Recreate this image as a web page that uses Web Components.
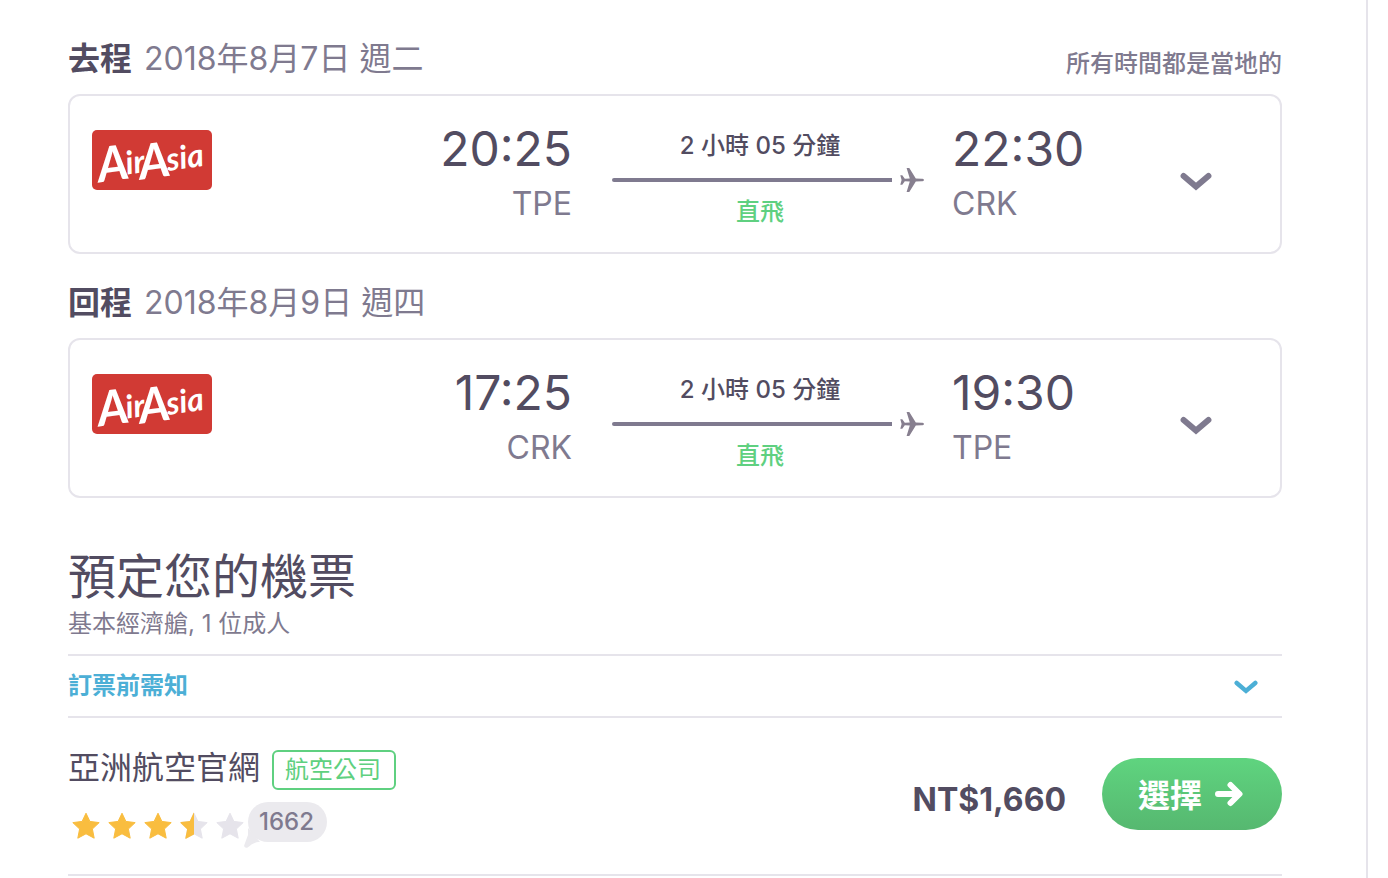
<!DOCTYPE html>
<html lang="zh-Hant">
<head>
<meta charset="utf-8">
<meta name="viewport" content="width=device-width, initial-scale=1">
<title>航班詳情</title>
<style>
  body {
    margin: 0;
    background: #fff;
    color: #524c61;
    font-family: Inter, "Noto Sans CJK TC", sans-serif;
  }
</style>
</head>
<body>
<trip-panel>
  <flight-leg label="去程" date="2018年8月7日 週二" note="所有時間都是當地的"
    depart="20:25" from="TPE" arrive="22:30" to="CRK" duration="2 小時 05 分鐘" stops="直飛"></flight-leg>
  <flight-leg label="回程" date="2018年8月9日 週四"
    depart="17:25" from="CRK" arrive="19:30" to="TPE" duration="2 小時 05 分鐘" stops="直飛"></flight-leg>
  <booking-section>
    <span slot="title">預定您的機票</span>
    <span slot="summary">基本經濟艙, 1 位成人</span>
    <span slot="notice">訂票前需知</span>
    <booking-offer price="NT$1,660" rating="3.5" reviews="1662">
      <span slot="name">亞洲航空官網</span>
      <span slot="badge">航空公司</span>
      <span slot="action">選擇</span>
    </booking-offer>
  </booking-section>
</trip-panel>

<script>
const define = (name, render) => customElements.define(name, class extends HTMLElement {
  connectedCallback() {
    if (this.shadowRoot) return;
    this.attachShadow({ mode: 'open' }).innerHTML = render(this);
  }
});

define('trip-panel', () => `
  <style>
    :host { display: block; }
    main {
      box-sizing: border-box;
      min-height: 100vh;
      margin-right: 20px;
      padding: 10px 84px 0 68px;
      border-right: 2px solid #e6e4eb;
    }
  </style>
  <main><slot></slot></main>`);

define('airline-logo', () => `
  <style>
    :host { display: block; width: 120px; height: 60px; }
    svg { display: block; overflow: visible; }
    text { font-family: Lato, sans-serif; font-style: italic; font-weight: 700; fill: #fff; font-size: 48px; }
    tspan { font-size: 32px; }
  </style>
  <svg width="120" height="60" viewBox="0 0 120 60" role="img" aria-label="AirAsia">
    <rect width="120" height="60" rx="5" fill="#d13a34"/>
    <g transform="rotate(-8 60 30)">
      <text x="5" y="45">A<tspan dx="-3" dy="-4">ir</tspan></text>
      <text x="46" y="48">A<tspan dx="-3" dy="-5">sia</tspan></text>
    </g>
  </svg>`);

define('chevron-icon', () => `
  <style>
    :host { display: block; width: 32px; }
    svg { display: block; width: 100%; }
  </style>
  <svg viewBox="0 0 32 20" aria-hidden="true">
    <path d="M3.600 4 16 14.500 28.400 4" fill="none" stroke="currentColor" stroke-width="6" stroke-linecap="round"/>
  </svg>`);

define('flight-leg', el => {
  const a = n => el.getAttribute(n);
  return `
  <style>
    :host { display: block; }
    header {
      display: flex;
      justify-content: space-between;
      align-items: flex-end;
      height: 84px;
      box-sizing: border-box;
      padding-bottom: 11px;
    }
    h2 { margin: 0; font-size: 32px; line-height: 48px; font-weight: 400; color: #7f7a8f; }
    h2 b { margin-right: 12px; font-weight: 700; color: #524c61; }
    .note { font-size: 24px; line-height: 38px; font-weight: 500; color: #7f7a8f; }
    article {
      display: grid;
      grid-template-columns: 120px 1fr 312px 256px 32px;
      box-sizing: border-box;
      height: 160px;
      padding: 25px 68px 0 22px;
      border: 2px solid #e6e4eb;
      border-radius: 12px;
    }
    airline-logo { margin-top: 9px; }
    .stop { display: flex; flex-direction: column; }
    .depart { align-items: flex-end; padding-right: 40px; }
    .arrive { padding-left: 28px; }
    time { font-size: 48px; line-height: 56px; }
    .code { font-size: 32px; line-height: 54px; color: #7f7a8f; }
    .route {
      display: flex;
      flex-direction: column;
      padding-top: 7px;
      font-size: 24px;
      line-height: 36px;
      font-weight: 500;
      text-align: center;
    }
    .route span { padding-right: 16px; }
    .route .stops { line-height: 32px; color: #5fd080; }
    .track { display: flex; align-items: center; gap: 8px; height: 32px; }
    .track i { flex: 1; height: 4px; border-radius: 2px 0 0 2px; background: #7f7a8f; }
    button { margin: 0; padding: 0; border: 0; background: none; color: #7f7a8f; height: 122px; cursor: pointer; }
  </style>
  <header>
    <h2><b>${a('label')}</b>${a('date')}</h2>
    ${a('note') ? `<span class="note">${a('note')}</span>` : ''}
  </header>
  <article>
    <airline-logo></airline-logo>
    <div class="stop depart"><time>${a('depart')}</time><span class="code">${a('from')}</span></div>
    <div class="route">
      <span>${a('duration')}</span>
      <div class="track"><i></i>
        <svg width="24" height="24" viewBox="0 0 24 24" aria-hidden="true">
          <path fill="#877f8f" d="M24 12c0 .8-1.200 1.300-2.500 1.300L15.800 13.600 9.300 24H6.600L9.800 13.400 4.800 13.200 2.300 16.800H.3L1.600 12 .3 7.200H2.300L4.800 10.800 9.800 10.600 6.600 0H9.300L15.800 10.400 21.500 10.700C22.800 10.700 24 11.200 24 12Z"/>
        </svg>
      </div>
      <span class="stops">${a('stops')}</span>
    </div>
    <div class="stop arrive"><time>${a('arrive')}</time><span class="code">${a('to')}</span></div>
    <button type="button" aria-label="顯示航班詳情"><chevron-icon></chevron-icon></button>
  </article>`;
});

define('booking-section', () => `
  <style>
    :host { display: block; padding-top: 48px; }
    h1 { margin: 0; font-size: 48px; line-height: 62px; font-weight: 400; }
    p { margin: 0; padding-bottom: 14px; font-size: 24px; line-height: 32px; color: #7f7a8f; }
    button {
      display: flex;
      justify-content: space-between;
      align-items: center;
      box-sizing: border-box;
      width: 100%;
      height: 64px;
      margin: 0;
      padding: 0 24px 0 0;
      border: solid #e6e4eb;
      border-width: 2px 0;
      background: none;
      color: #4cafd6;
      font: 700 24px/36px Inter, "Noto Sans CJK TC", sans-serif;
      cursor: pointer;
    }
    chevron-icon { width: 24px; padding-top: 2px; }
  </style>
  <h1><slot name="title"></slot></h1>
  <p><slot name="summary"></slot></p>
  <button type="button" aria-expanded="false"><slot name="notice"></slot><chevron-icon></chevron-icon></button>
  <slot></slot>`);

define('star-rating', el => {
  const value = Number(el.getAttribute('value'));
  const full = 'M14 1.200 17.900 9.400 27.200 10.600 20.400 17 22.200 26.200 14 21.800 5.800 26.200 7.600 17 .8 10.600 10.100 9.400Z';
  const half = 'M14 .6 13.500 .9 9.800 9 .8 10.100Q.2 10.600 .5 11L7.100 17.200 5.300 26.200Q5.400 26.800 6 26.700L14 22.400Z';
  const stars = [0, 1, 2, 3, 4].map(i => {
    const part = value - i;
    const base = part >= 1 ? '#f9bd3f' : '#e6e4eb';
    return `<svg width="28" height="28" viewBox="0 0 28 28" aria-hidden="true">
      <path d="${full}" fill="${base}" stroke="${base}" stroke-linejoin="round"/>
      ${part > 0 && part < 1 ? `<path d="${half}" fill="#f9bd3f"/>` : ''}
    </svg>`;
  }).join('');
  return `
  <style>
    :host { display: flex; gap: 8px; }
    svg { display: block; }
  </style>${stars}`;
});

define('booking-offer', el => `
  <style>
    :host {
      display: flex;
      justify-content: space-between;
      align-items: center;
      padding: 32px 0;
      border-bottom: 2px solid #e6e4eb;
    }
    .heading { display: flex; align-items: flex-start; gap: 12px; }
    h3 { margin: 0; font-size: 32px; line-height: 36px; font-weight: 400; }
    .badge {
      padding: 0 13px 0 11px;
      border: 2px solid #5fd080;
      border-radius: 6px;
      color: #5fd080;
      font-size: 24px;
      line-height: 36px;
    }
    .feedback { display: flex; gap: 4px; margin-top: 12px; padding-left: 4px; }
    star-rating { padding-top: 10px; }
    .reviews {
      position: relative;
      padding: 0 13px 0 11px;
      border-radius: 20px;
      background: #ebeaee;
      color: #7f7a8f;
      font-size: 24px;
      line-height: 40px;
      font-weight: 500;
    }
    .reviews svg { position: absolute; left: -4px; bottom: -6px; }
    .buy { display: flex; align-items: center; gap: 36px; padding-bottom: 4px; }
    .price { padding-top: 12px; font-size: 32px; line-height: 40px; font-weight: 700; }
    button {
      display: flex;
      align-items: center;
      gap: 12px;
      height: 72px;
      margin: 0;
      padding: 0 38px 0 36px;
      border: 0;
      border-radius: 36px;
      background: linear-gradient(#5fd47f, #56b870);
      color: #fff;
      font: 700 32px/48px Inter, "Noto Sans CJK TC", sans-serif;
      cursor: pointer;
    }
    button span { padding-top: 4px; }
  </style>
  <div>
    <div class="heading"><h3><slot name="name"></slot></h3><span class="badge"><slot name="badge"></slot></span></div>
    <div class="feedback">
      <star-rating value="${el.getAttribute('rating')}"></star-rating>
      <span class="reviews"><svg width="20" height="20" viewBox="0 0 20 20" aria-hidden="true"><path d="M4 0V7L.3 17C-.4 19.500 2 20.600 4 19.300 7 17 9.500 14 16 14Z" fill="#ebeaee"/></svg>${el.getAttribute('reviews')}</span>
    </div>
  </div>
  <div class="buy">
    <span class="price">${el.getAttribute('price')}</span>
    <button type="button"><span><slot name="action"></slot></span>
      <svg width="30" height="26" viewBox="0 0 30 26" aria-hidden="true">
        <path d="M4 13H25M16.500 4 25.500 13 16.500 22" fill="none" stroke="#fff" stroke-width="6" stroke-linecap="round" stroke-linejoin="round"/>
      </svg>
    </button>
  </div>`);
</script>
</body>
</html>
